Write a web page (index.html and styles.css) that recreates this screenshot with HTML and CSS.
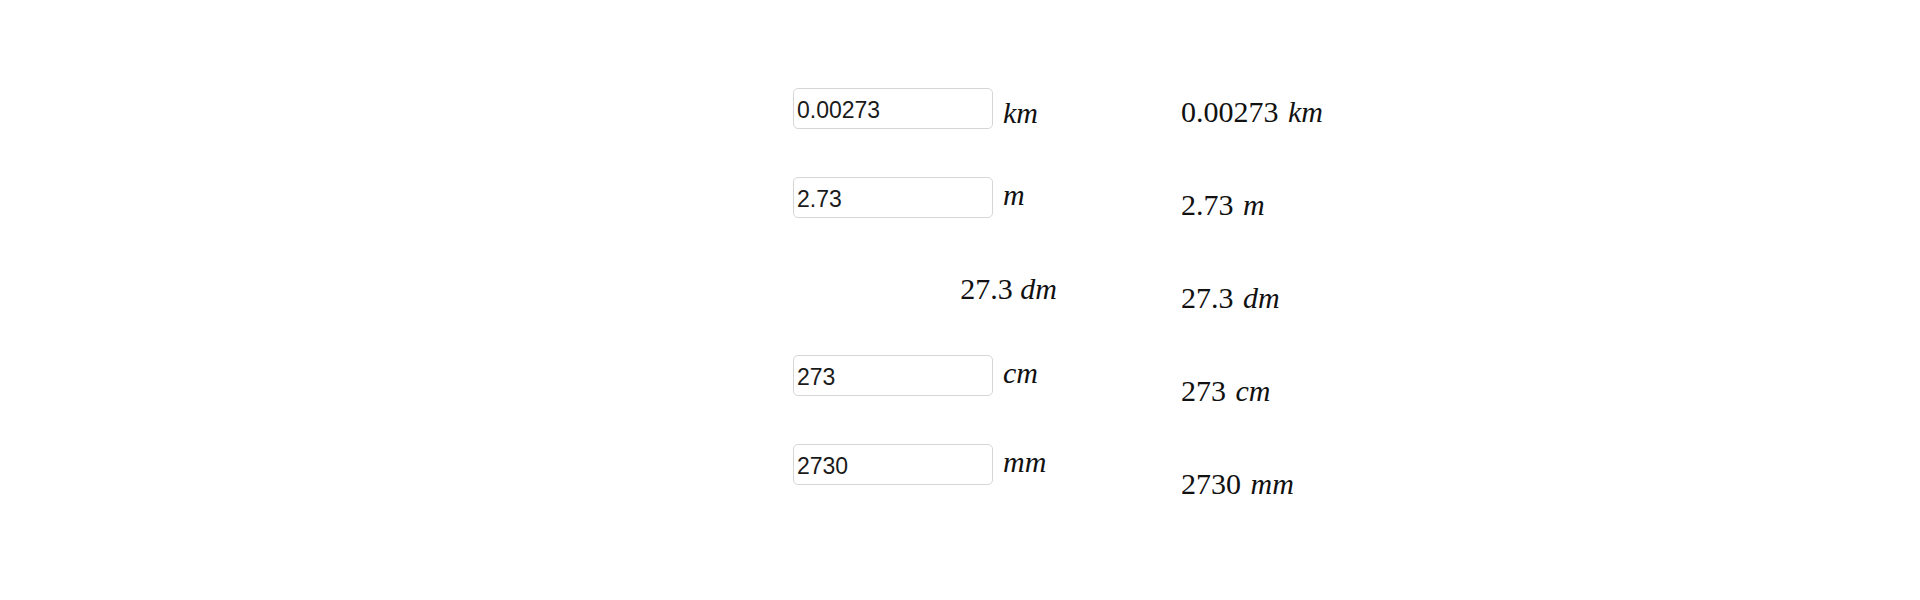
FILE: index.html
```html
<html>
<head>
	<link rel="stylesheet" href="styles.css">
	<title>Length converter</title>
</head>
<body>
	<div class="converter">
		<div class="inputs">
			<div class="row">
				<input type="text" class="field" value="0.00273" />
				<span class="unit tall">km</span>
			</div>
			<div class="row">
				<input type="text" class="field" value="2.73" />
				<span class="unit">m</span>
			</div>
			<div class="row fixed">
				<span class="num">27.3</span>&nbsp;<span class="unit">dm</span>
			</div>
			<div class="row">
				<input type="text" class="field" value="273" />
				<span class="unit">cm</span>
			</div>
			<div class="row">
				<input type="text" class="field" value="2730" />
				<span class="unit">mm</span>
			</div>
		</div>
		<div class="results">
			<div class="result">0.00273 <i>km</i></div>
			<div class="result">2.73 <i>m</i></div>
			<div class="result">27.3 <i>dm</i></div>
			<div class="result">273 <i>cm</i></div>
			<div class="result">2730 <i>mm</i></div>
		</div>
	</div>
</body>
</html>
```

FILE: styles.css
```css
body {
	margin: 0;
	background-color: #ffffff;
	color: #111111;
}
.converter {
	display: flex;
	padding: 88px 0 0 793px;
}
.inputs {
	width: 264px;
	display: flex;
	flex-direction: column;
}
.row {
	height: 89px;
	display: flex;
	align-items: flex-start;
	gap: 10px;
}
.row.fixed {
	justify-content: flex-end;
	gap: 0;
	padding-top: 3px;
	font-family: "Liberation Serif", serif;
	font-size: 30px;
	line-height: 40px;
	height: 86px;
}
.field {
	width: 200px;
	height: 41px;
	box-sizing: border-box;
	margin: 0;
	padding: 3px 3px 0 3px;
	border: 1px solid #d6d6d6;
	border-radius: 5px;
	font-family: "Liberation Sans", Arial, sans-serif;
	font-size: 23px;
	color: #1a1a1a;
	outline: none;
}
.unit {
	font-family: "Liberation Serif", serif;
	font-style: italic;
	font-size: 30px;
	line-height: 40px;
}
.inputs .row .unit {
	margin-top: -2px;
}
.inputs .row .unit.tall {
	margin-top: 5px;
}
.inputs .row.fixed .unit {
	margin-top: 0;
}
.results {
	margin-left: 124px;
	padding-top: 4px;
}
.result {
	height: 93px;
	font-family: "Liberation Serif", serif;
	font-size: 30px;
	line-height: 40px;
	white-space: nowrap;
}
.result i {
	margin-left: 2px;
}
```
